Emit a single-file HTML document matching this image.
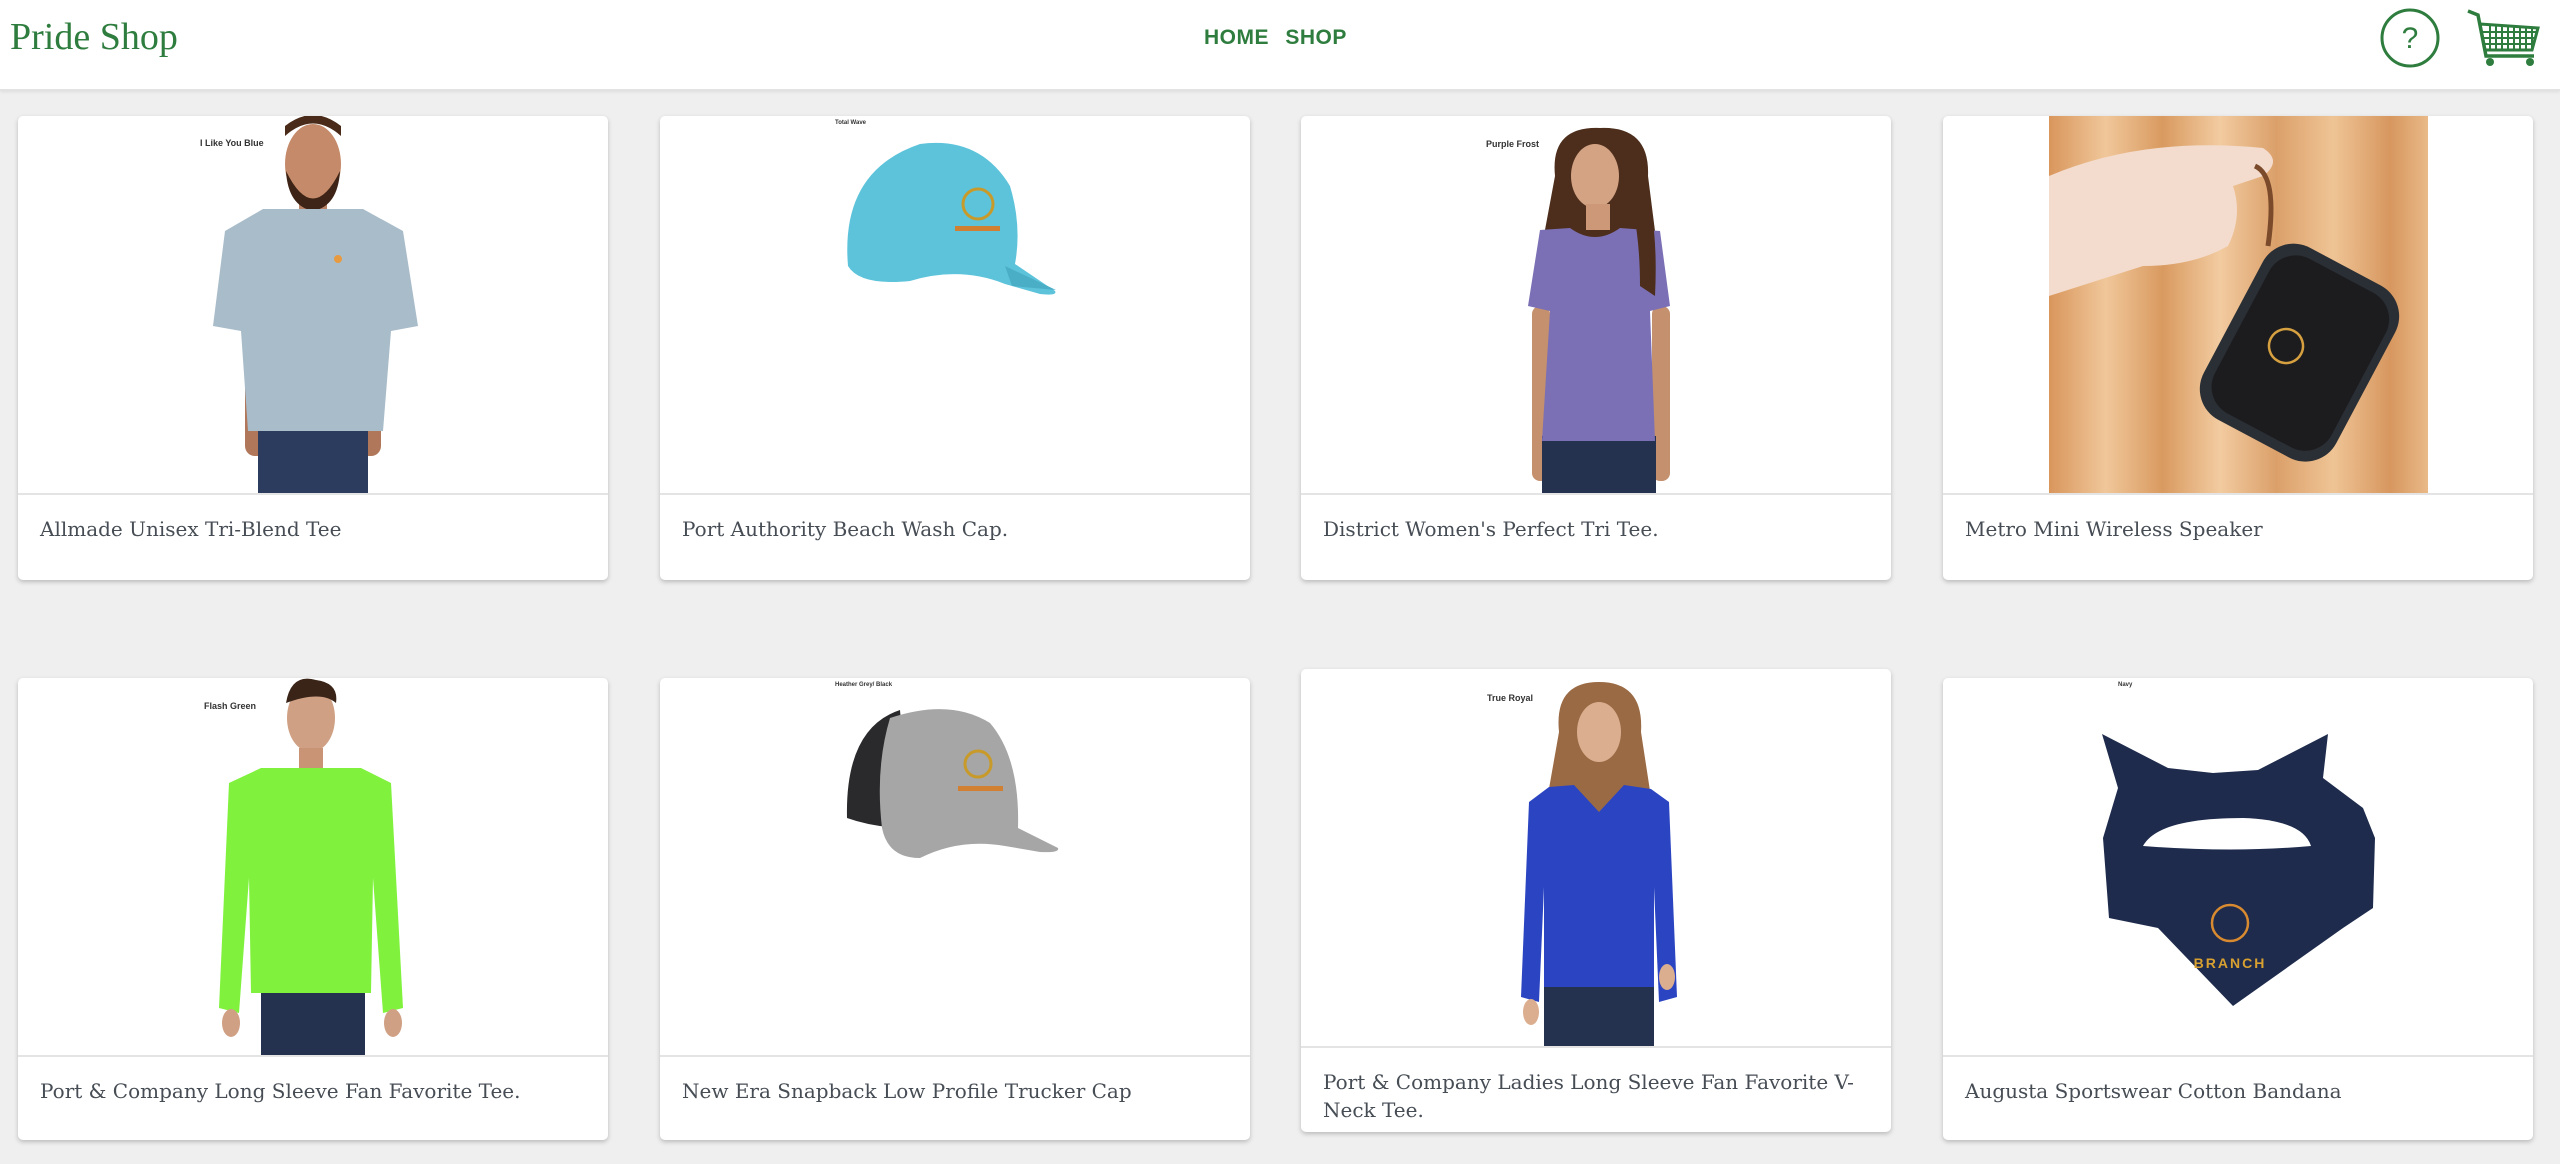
<!DOCTYPE html>
<html><head><meta charset="utf-8">
<style>
*{margin:0;padding:0;box-sizing:border-box}
html,body{width:2560px;height:1164px;overflow:hidden;background:#efefef;font-family:"DejaVu Serif","Liberation Serif",serif}
.hdr{position:absolute;left:0;top:0;width:2560px;height:91px;background:#fff;border-bottom:2px solid #e2e2e2;box-shadow:0 1px 3px rgba(0,0,0,.08)}
.logo{position:absolute;left:10px;top:15px;font-family:"Liberation Serif",serif;font-size:38px;color:#2e7d3e}
.nav{position:absolute;left:1204px;top:26px;font-family:"Liberation Sans",sans-serif;font-weight:bold;font-size:21px;color:#2e7d3e;letter-spacing:.5px;word-spacing:10px}
.card{position:absolute;width:590px;background:#fff;border-radius:5px;box-shadow:0 2px 5px rgba(0,0,0,.22);overflow:hidden}
.card svg{display:block;width:590px;height:377px}
.t{border-top:2px solid #e4e4e4;padding:20px 22px 0 22px;font-size:20px;color:#474d55;line-height:28px;white-space:nowrap}
.lbl{font-family:"Liberation Sans",sans-serif;font-weight:bold;fill:#333}
</style></head><body>
<div class="hdr">
<div class="logo">Pride Shop</div>
<div class="nav">HOME SHOP</div>
<svg style="position:absolute;left:2378px;top:6px" width="64" height="64"><circle cx="32" cy="32" r="28" fill="none" stroke="#2e7d3e" stroke-width="3"/><text x="32" y="42" text-anchor="middle" font-family="Liberation Sans" font-size="30" fill="#2e7d3e">?</text></svg>
<svg style="position:absolute;left:2466px;top:6px" width="76" height="62" viewBox="0 0 76 62"><path d="M2 5 L12 9 L20 50 L68 50" fill="none" stroke="#2e7d3e" stroke-width="3.5"/><path d="M14 18 L72 22 L66 44 L19 44 Z" fill="none" stroke="#2e7d3e" stroke-width="3"/><path d="M24 19v25M30 19v25M36 20v24M42 20v24M48 21v23M54 21v23M60 22v22M66 22v20M16 26h55M17 32h53M18 38h50" stroke="#2e7d3e" stroke-width="2"/><circle cx="24" cy="56" r="4" fill="#2e7d3e"/><circle cx="64" cy="56" r="4" fill="#2e7d3e"/></svg>
</div>

<!-- Row 1 -->
<div class="card" style="left:18px;top:116px;height:464px">
<svg viewBox="0 0 590 377">
<text class="lbl" x="182" y="30" font-size="9">I Like You Blue</text>
<g transform="translate(295,0)">
<rect x="-68" y="200" width="22" height="140" rx="10" fill="#b0775a"/><rect x="46" y="200" width="22" height="140" rx="10" fill="#b0775a"/>
<rect x="-55" y="300" width="110" height="77" fill="#2b3c5e"/>
<rect x="-14" y="80" width="28" height="25" fill="#b88366"/>
<ellipse cx="0" cy="48" rx="28" ry="40" fill="#c48a6a"/>
<path d="M-28 20 Q0 -5 28 20 L28 10 Q0 -12 -28 10Z" fill="#4a2a18"/>
<path d="M-27 55 Q0 110 27 55 Q25 90 0 95 Q-25 90 -27 55Z" fill="#3e2416"/>
<path d="M-50 93 L50 93 L90 115 L105 210 L78 215 L70 315 L-65 315 L-72 215 L-100 210 L-88 115Z" fill="#a9bcc9"/>
<circle cx="25" cy="143" r="4" fill="#e89a40"/>
</g></svg>
<div class="t">Allmade Unisex Tri-Blend Tee</div></div>

<div class="card" style="left:660px;top:116px;height:464px">
<svg viewBox="0 0 590 377">
<text class="lbl" x="175" y="8" font-size="6">Total Wave</text>
<path d="M188 150 Q180 55 260 28 Q320 20 350 70 Q362 110 355 148 L395 175 Q398 180 380 178 L345 168 Q300 150 250 165 Q200 170 188 150Z" fill="#5dc3da"/>
<path d="M345 150 L396 174 L352 170Z" fill="#4aaec6"/>
<circle cx="318" cy="88" r="15" fill="none" stroke="#c89a2a" stroke-width="3"/>
<rect x="295" y="110" width="45" height="5" fill="#d08030"/>
</svg>
<div class="t">Port Authority Beach Wash Cap.</div></div>

<div class="card" style="left:1301px;top:116px;height:464px">
<svg viewBox="0 0 590 377">
<text class="lbl" x="185" y="31" font-size="9">Purple Frost</text>
<g transform="translate(299,0)">
<path d="M-45 60 Q-50 10 0 12 Q50 10 48 60 L62 170 L-58 130Z" fill="#4d2e1c"/>
<rect x="-68" y="190" width="18" height="175" rx="8" fill="#c4906e"/><rect x="52" y="190" width="18" height="175" rx="8" fill="#c4906e"/>
<rect x="-58" y="320" width="114" height="57" fill="#24324f"/>
<ellipse cx="-5" cy="60" rx="24" ry="32" fill="#d3a383"/>
<rect x="-14" y="88" width="24" height="26" fill="#cd9878"/>
<path d="M-60 114 L-30 112 Q-5 130 20 112 L60 115 L70 190 L50 195 L55 325 L-58 325 L-50 195 L-72 190Z" fill="#7b70b5"/>
<path d="M30 40 Q60 80 55 180 L40 170 Q40 100 22 60Z" fill="#4d2e1c"/>
</g></svg>
<div class="t">District Women's Perfect Tri Tee.</div></div>

<div class="card" style="left:1943px;top:116px;height:464px">
<svg viewBox="0 0 590 377">
<defs><linearGradient id="w" x1="0" x2="1"><stop offset="0" stop-color="#d9965c"/><stop offset=".15" stop-color="#f0c79a"/><stop offset=".3" stop-color="#d99a60"/><stop offset=".45" stop-color="#f2cba0"/><stop offset=".6" stop-color="#dba06a"/><stop offset=".75" stop-color="#efc495"/><stop offset=".9" stop-color="#d7975f"/><stop offset="1" stop-color="#e9b987"/></linearGradient></defs>
<rect x="106" y="0" width="379" height="377" fill="url(#w)"/>
<path d="M106 60 Q200 20 320 32 Q340 45 320 60 L290 70 Q300 100 285 130 Q250 150 200 150 L106 180Z" fill="#f3dccd"/>
<path d="M312 50 Q335 60 325 130" fill="none" stroke="#7a4a2a" stroke-width="5"/>
<g transform="rotate(28 360 230)"><rect x="285" y="140" width="150" height="195" rx="35" fill="#2a2f35"/><rect x="295" y="150" width="132" height="175" rx="30" fill="#1c1c1e"/>
<circle cx="345" cy="238" r="17" fill="none" stroke="#d6a040" stroke-width="2.5"/></g>
</svg>
<div class="t">Metro Mini Wireless Speaker</div></div>

<!-- Row 2 -->
<div class="card" style="left:18px;top:678px;height:462px">
<svg viewBox="0 0 590 377">
<text class="lbl" x="186" y="31" font-size="9">Flash Green</text>
<g transform="translate(293,0)">
<rect x="-50" y="310" width="104" height="67" fill="#24324f"/>
<ellipse cx="0" cy="40" rx="24" ry="34" fill="#d0a084"/>
<path d="M-25 25 Q-20 -5 5 2 Q28 5 25 25 Q10 12 -25 25Z" fill="#3a2418"/>
<rect x="-12" y="70" width="24" height="22" fill="#c99476"/>
<path d="M-50 90 L50 90 L80 105 L92 330 L72 335 L62 200 L60 315 L-60 315 L-62 200 L-72 335 L-92 330 L-82 105Z" fill="#80f23e"/>
<ellipse cx="-80" cy="345" rx="9" ry="14" fill="#d0a084"/><ellipse cx="82" cy="345" rx="9" ry="14" fill="#d0a084"/>
</g></svg>
<div class="t">Port &amp; Company Long Sleeve Fan Favorite Tee.</div></div>

<div class="card" style="left:660px;top:678px;height:462px">
<svg viewBox="0 0 590 377">
<text class="lbl" x="175" y="8" font-size="6">Heather Grey/ Black</text>
<path d="M187 140 Q185 50 240 32 L250 150 Q215 150 187 140Z" fill="#2a2a2c"/>
<path d="M230 40 Q290 20 330 45 Q360 80 358 150 L398 170 Q400 175 380 174 L345 168 Q300 160 260 180 Q228 180 222 150 Q215 90 230 40Z" fill="#a6a6a6"/>
<circle cx="318" cy="86" r="13" fill="none" stroke="#c89a2a" stroke-width="3"/>
<rect x="298" y="108" width="45" height="5" fill="#d08030"/>
</svg>
<div class="t">New Era Snapback Low Profile Trucker Cap</div></div>

<div class="card" style="left:1301px;top:669px;height:463px">
<svg viewBox="0 0 590 377">
<text class="lbl" x="186" y="32" font-size="9">True Royal</text>
<g transform="translate(298,8)">
<path d="M-40 55 Q-45 5 0 5 Q45 5 42 55 L55 140 L-55 140Z" fill="#9a6a44"/>
<ellipse cx="0" cy="55" rx="22" ry="30" fill="#dcae90"/>
<rect x="-55" y="305" width="110" height="64" fill="#24324f"/>
<path d="M-50 110 L-25 108 L0 135 L25 108 L52 112 L70 125 L78 320 L60 325 L55 210 L55 310 L-55 310 L-55 210 L-60 325 L-78 320 L-70 125Z" fill="#2b45c2"/>
<ellipse cx="-68" cy="335" rx="8" ry="13" fill="#dcae90"/><ellipse cx="68" cy="300" rx="8" ry="13" fill="#dcae90"/>
</g></svg>
<div class="t">Port &amp; Company Ladies Long Sleeve Fan Favorite V-<br>Neck Tee.</div></div>

<div class="card" style="left:1943px;top:678px;height:462px">
<svg viewBox="0 0 590 377">
<text class="lbl" x="175" y="8" font-size="6">Navy</text>
<path d="M159 56 L225 90 L270 95 L315 92 L385 56 L380 100 L420 130 L432 160 L430 230 L400 250 L290 328 L215 250 L166 240 L160 160 L175 110 Z" fill="#1e2b4c"/>
<path d="M200 168 Q215 140 300 140 Q360 142 368 168 Q290 175 200 168Z" fill="#fff"/>
<circle cx="287" cy="245" r="18" fill="none" stroke="#d88a30" stroke-width="2.5"/>
<text x="287" y="290" text-anchor="middle" font-family="Liberation Sans" font-weight="bold" font-size="14" fill="#d8a030" letter-spacing="2">BRANCH</text>
</svg>
<div class="t">Augusta Sportswear Cotton Bandana</div></div>
</body></html>
